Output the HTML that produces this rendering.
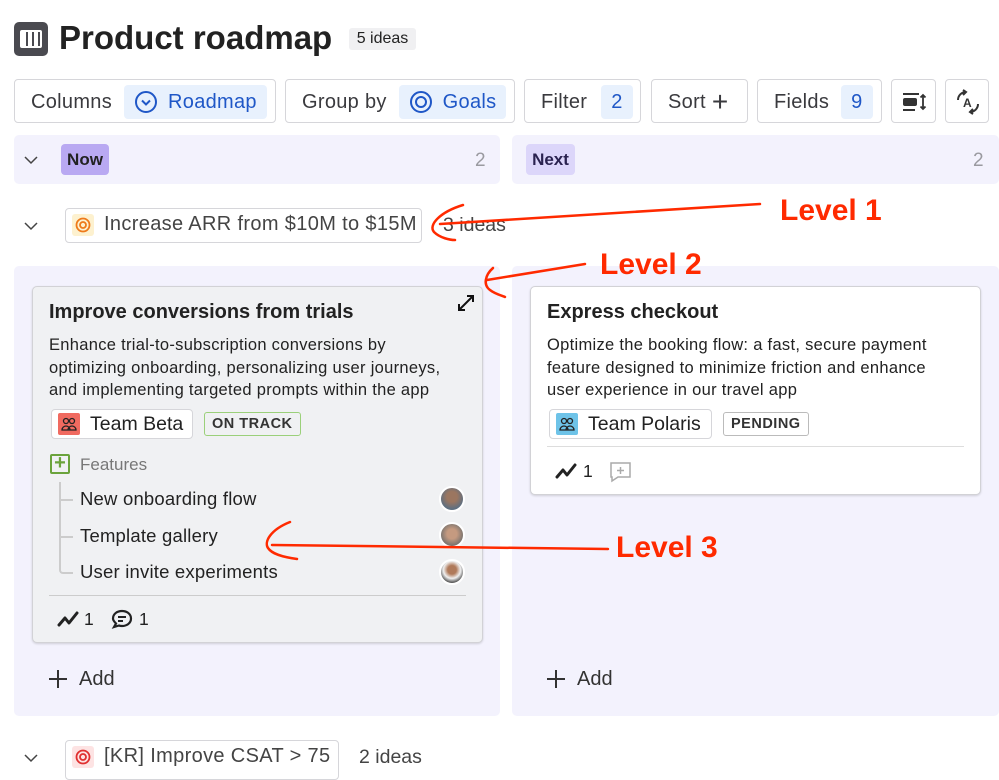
<!DOCTYPE html>
<html><head><meta charset="utf-8"><style>
*{box-sizing:border-box;margin:0;padding:0}
body{width:999px;height:774px;background:#fff;font-family:"Liberation Sans",sans-serif;color:#222;position:relative;overflow:hidden}
.a{position:absolute}
.btn{position:absolute;top:79px;height:44px;border:1px solid #d6d6da;border-radius:4px;background:#fff;display:flex;align-items:center;font-size:20px;letter-spacing:.3px;color:#3a3a3e;padding-left:16px;padding-top:2px}
.chip{background:#e8f1fd;color:#1f57c7;border-radius:4px;height:34px;display:flex;align-items:center;padding:0 10px;margin-left:12px}
.col{position:absolute;background:#f3f2fd;border-radius:5px}
.card{position:absolute;border:1px solid #d2d2d6;border-radius:5px;box-shadow:0 1px 2px rgba(0,0,0,.15)}
.t{font-size:20px;font-weight:bold;color:#222}
.d{font-size:16.5px;line-height:22.5px;color:#222;letter-spacing:.3px;white-space:nowrap}
.tag{position:absolute;border:1px solid #d6d6da;border-radius:4px;background:#fff;height:30px;display:flex;align-items:center;font-size:19.5px;padding:0 6px}
.st{position:absolute;height:24px;border-radius:3px;font-size:14.5px;font-weight:bold;display:flex;align-items:center;padding:0 7px;letter-spacing:.5px}
.red{color:#ff2a00;font-weight:bold;font-size:30px;position:absolute}
.it{position:absolute;left:80px;font-size:18.5px;letter-spacing:.2px}
</style></head><body>
<div class="a" style="left:14px;top:22px;width:34px;height:34px;background:#4a4a50;border-radius:5px"></div>
<div class="a" style="left:20px;top:30px;width:22px;height:18px;border:2px solid #fff;border-radius:2px;background:repeating-linear-gradient(90deg,#fff 0 4px,#4a4a50 4px 6px)"></div>
<div class="a" style="left:59px;top:19px;font-size:33px;font-weight:bold;color:#222">Product roadmap</div>
<div class="a" style="left:349px;top:28px;height:22px;width:67px;background:#f0f0f2;border-radius:3px;font-size:16px;text-align:center;line-height:22px">5 ideas</div>

<div class="btn" style="left:14px;width:262px">Columns<div class="chip"><svg width="24" height="24" viewBox="0 0 24 24"><circle cx="12" cy="12" r="10" fill="none" stroke="#1f57c7" stroke-width="2"/><path d="M8 10.5l4 4 4-4" fill="none" stroke="#1f57c7" stroke-width="2"/></svg><span style="margin-left:10px">Roadmap</span></div></div>
<div class="btn" style="left:285px;width:230px">Group by<div class="chip"><svg width="24" height="24" viewBox="0 0 24 24"><circle cx="12" cy="12" r="10" fill="none" stroke="#1f57c7" stroke-width="2"/><circle cx="12" cy="12" r="5" fill="none" stroke="#1f57c7" stroke-width="2"/></svg><span style="margin-left:10px">Goals</span></div></div>
<div class="btn" style="left:524px;width:117px">Filter<div class="chip" style="margin-left:14px">2</div></div>
<div class="btn" style="left:651px;width:97px">Sort <span style="font-size:28px;font-weight:300;margin-left:6px">+</span></div>
<div class="btn" style="left:757px;width:125px">Fields<div class="chip">9</div></div>
<div class="btn" style="left:891px;width:45px;padding-left:10px"><svg width="26" height="24" viewBox="0 0 26 24"><rect x="1" y="3" width="16" height="2" fill="#333"/><rect x="1" y="8" width="14" height="8" rx="2" fill="#333"/><rect x="1" y="19" width="12" height="2" fill="#333"/><path d="M21 5v14M18.5 7.5L21 5l2.5 2.5M18.5 16.5L21 19l2.5-2.5" stroke="#333" stroke-width="1.8" fill="none"/></svg></div>
<div class="btn" style="left:945px;width:44px;padding-left:9px"><svg width="26" height="28" viewBox="0 0 26 28"><path d="M3 12a8 8 0 0 1 8-8M8 2l3 2-3 3M23 16a8 8 0 0 1-8 8M18 26l-3-2 3-3" stroke="#333" stroke-width="2" fill="none"/><text x="8" y="19" font-size="12" font-weight="bold" fill="#333" font-family="Liberation Sans">A</text></svg></div>

<div class="col" style="left:14px;top:135px;width:486px;height:49px"></div>
<div class="col" style="left:512px;top:135px;width:487px;height:49px"></div>
<svg class="a" style="left:24px;top:155px" width="14" height="10"><path d="M1 2l6 6 6-6" stroke="#444" stroke-width="1.5" fill="none"/></svg>
<div class="a" style="left:61px;top:144px;width:48px;height:31px;background:#b9a9f2;border-radius:4px;font-size:17px;font-weight:bold;line-height:31px;text-align:center;color:#222">Now</div>
<div class="a" style="left:475px;top:150px;font-size:19px;color:#9a9aa0">2</div>
<div class="a" style="left:526px;top:144px;width:49px;height:31px;background:#dcd6fa;border-radius:4px;font-size:17px;font-weight:bold;line-height:31px;text-align:center;color:#2a2250">Next</div>
<div class="a" style="left:973px;top:150px;font-size:19px;color:#9a9aa0">2</div>

<svg class="a" style="left:24px;top:221px" width="14" height="10"><path d="M1 2l6 6 6-6" stroke="#444" stroke-width="1.5" fill="none"/></svg>
<div class="a" style="left:65px;top:208px;width:357px;height:35px;border:1px solid #d6d6da;border-radius:4px;background:#fff"></div>
<div class="a" style="left:72px;top:214px;width:22px;height:22px;background:#fdf1cf;border-radius:3px"></div>
<svg class="a" style="left:75px;top:217px" width="16" height="16"><circle cx="8" cy="8" r="6.5" fill="none" stroke="#ee7a1a" stroke-width="1.8"/><circle cx="8" cy="8" r="3" fill="none" stroke="#ee7a1a" stroke-width="1.8"/></svg>
<div class="a" style="left:104px;top:213px;font-size:20px;letter-spacing:.35px;color:#444">Increase ARR from $10M to $15M</div>
<div class="a" style="left:443px;top:214px;font-size:19.5px;color:#444">3 ideas</div>

<div class="col" style="left:14px;top:266px;width:486px;height:450px"></div>
<div class="col" style="left:512px;top:266px;width:487px;height:450px"></div>

<div class="card" style="left:32px;top:286px;width:451px;height:357px;background:#f0f1f3"></div>
<div class="a t" style="left:49px;top:301px">Improve conversions from trials</div>
<svg class="a" style="left:455px;top:292px" width="22" height="22"><path d="M4 18L18 4M12 4h6v6M4 12v6h6" stroke="#111" stroke-width="2" fill="none"/></svg>
<div class="a d" style="left:49px;top:334px">Enhance trial-to-subscription conversions by<br>optimizing onboarding, personalizing user journeys,<br>and implementing targeted prompts within the app</div>
<div class="tag" style="left:51px;top:409px;width:142px"><div style="width:22px;height:22px;background:#f06a60;border-radius:2px;margin-right:10px;position:relative"><svg class="a" style="left:3px;top:3px" width="16" height="16"><circle cx="5" cy="5" r="2.5" fill="none" stroke="#222" stroke-width="1.3"/><circle cx="11" cy="5" r="2.5" fill="none" stroke="#222" stroke-width="1.3"/><path d="M1 14a4 4 0 0 1 8 0zM7 14a4 4 0 0 1 8 0z" fill="none" stroke="#222" stroke-width="1.3"/></svg></div>Team Beta</div>
<div class="st" style="left:204px;top:412px;border:1.5px solid #9bd07a;color:#333">ON TRACK</div>
<div class="a" style="left:50px;top:454px;width:20px;height:20px;border:2px solid #6ba33c;border-radius:2px;color:#6ba33c;font-size:20px;line-height:14px;text-align:center;font-weight:bold">+</div>
<div class="a" style="left:80px;top:455px;font-size:17px;color:#777">Features</div>
<div class="a" style="left:59px;top:482px;width:14px;height:92px;border-left:2px solid #ccc;border-bottom:2px solid #ccc;border-bottom-left-radius:4px"></div>
<div class="a" style="left:61px;top:499px;width:12px;border-top:2px solid #ccc"></div>
<div class="a" style="left:61px;top:536px;width:12px;border-top:2px solid #ccc"></div>
<div class="it" style="top:488px">New onboarding flow</div>
<div class="it" style="top:525px">Template gallery</div>
<div class="it" style="top:561px">User invite experiments</div>
<div class="a" style="left:439px;top:486px;width:26px;height:26px;border-radius:50%;background:radial-gradient(circle at 50% 40%,#9b7660 30%,#5f6f80 70%);border:2px solid #fff"></div>
<div class="a" style="left:439px;top:522px;width:26px;height:26px;border-radius:50%;background:radial-gradient(circle at 50% 45%,#c59a80 30%,#7a7470 70%);border:2px solid #fff"></div>
<div class="a" style="left:439px;top:559px;width:26px;height:26px;border-radius:50%;background:radial-gradient(circle at 50% 40%,#b07a5a 25%,#f0f0f0 50%,#333 80%);border:2px solid #fff"></div>
<div class="a" style="left:49px;top:595px;width:417px;border-top:1px solid #ccc"></div>
<svg class="a" style="left:57px;top:610px" width="24" height="18"><path d="M2 15l6-7 4 5 8-10" stroke="#222" stroke-width="3" fill="none" stroke-linejoin="round" stroke-linecap="round"/></svg>
<div class="a" style="left:84px;top:609px;font-size:17.5px">1</div>
<svg class="a" style="left:111px;top:609px" width="24" height="22"><path d="M11 2c5 0 9 3 9 7.5S16 17 11 17c-1 0-2 0-3-.5L3 18l2-3.5C3.5 13 2 11.5 2 9.5 2 5 6 2 11 2z" stroke="#222" stroke-width="2.2" fill="none"/><path d="M7 8h8M7 12h5" stroke="#222" stroke-width="2"/></svg>
<div class="a" style="left:139px;top:609px;font-size:17.5px">1</div>
<svg class="a" style="left:48px;top:669px" width="20" height="20"><path d="M10 1v18M1 10h18" stroke="#333" stroke-width="2"/></svg>
<div class="a" style="left:79px;top:668px;font-size:20px;color:#333">Add</div>

<div class="card" style="left:530px;top:286px;width:451px;height:209px;background:#fff"></div>
<div class="a t" style="left:547px;top:301px">Express checkout</div>
<div class="a d" style="left:547px;top:334px">Optimize the booking flow: a fast, secure payment<br>feature designed to minimize friction and enhance<br>user experience in our travel app</div>
<div class="tag" style="left:549px;top:409px;width:163px"><div style="width:22px;height:22px;background:#6ec3e8;border-radius:2px;margin-right:10px;position:relative"><svg class="a" style="left:3px;top:3px" width="16" height="16"><circle cx="5" cy="5" r="2.5" fill="none" stroke="#222" stroke-width="1.3"/><circle cx="11" cy="5" r="2.5" fill="none" stroke="#222" stroke-width="1.3"/><path d="M1 14a4 4 0 0 1 8 0zM7 14a4 4 0 0 1 8 0z" fill="none" stroke="#222" stroke-width="1.3"/></svg></div>Team Polaris</div>
<div class="st" style="left:723px;top:412px;border:1.5px solid #bbb;color:#333">PENDING</div>
<div class="a" style="left:547px;top:446px;width:417px;border-top:1px solid #ddd"></div>
<svg class="a" style="left:555px;top:462px" width="24" height="18"><path d="M2 15l6-7 4 5 8-10" stroke="#222" stroke-width="3" fill="none" stroke-linejoin="round" stroke-linecap="round"/></svg>
<div class="a" style="left:583px;top:461px;font-size:17.5px">1</div>
<svg class="a" style="left:609px;top:461px" width="24" height="22"><path d="M2 2h19v14H9l-6 4V16H2z" stroke="#aaa" stroke-width="1.5" fill="none"/><path d="M11.5 6v7M8 9.5h7" stroke="#aaa" stroke-width="1.5"/></svg>
<svg class="a" style="left:546px;top:669px" width="20" height="20"><path d="M10 1v18M1 10h18" stroke="#333" stroke-width="2"/></svg>
<div class="a" style="left:577px;top:668px;font-size:20px;color:#333">Add</div>

<svg class="a" style="left:24px;top:753px" width="14" height="10"><path d="M1 2l6 6 6-6" stroke="#444" stroke-width="1.5" fill="none"/></svg>
<div class="a" style="left:65px;top:740px;width:274px;height:40px;border:1px solid #d6d6da;border-radius:4px;background:#fff"></div>
<div class="a" style="left:72px;top:746px;width:22px;height:22px;background:#fde3e3;border-radius:3px"></div>
<svg class="a" style="left:75px;top:749px" width="16" height="16"><circle cx="8" cy="8" r="6.5" fill="none" stroke="#e03030" stroke-width="1.8"/><circle cx="8" cy="8" r="3" fill="none" stroke="#e03030" stroke-width="1.8"/></svg>
<div class="a" style="left:104px;top:745px;font-size:20px;letter-spacing:.35px;color:#444">[KR] Improve CSAT &gt; 75</div>
<div class="a" style="left:359px;top:746px;font-size:19.5px;color:#444">2 ideas</div>

<svg class="a" style="left:0;top:0" width="999" height="774"><g stroke="#ff2a00" stroke-width="2.5" fill="none" stroke-linecap="round">
<path d="M760 204L440 224"/><path d="M463 205C440 212 428 225 434 232C440 238 450 240 455 240"/>
<path d="M585 264L487 280"/><path d="M493 268C485 275 483 285 490 290C495 294 503 296 505 297"/>
<path d="M608 549L272 545"/><path d="M290 522C270 530 264 542 268 548C272 554 282 557 297 559"/>
</g></svg>
<div class="red" style="left:780px;top:194px">Level 1</div>
<div class="red" style="left:600px;top:248px">Level 2</div>
<div class="red" style="left:616px;top:531px">Level 3</div>
</body></html>
